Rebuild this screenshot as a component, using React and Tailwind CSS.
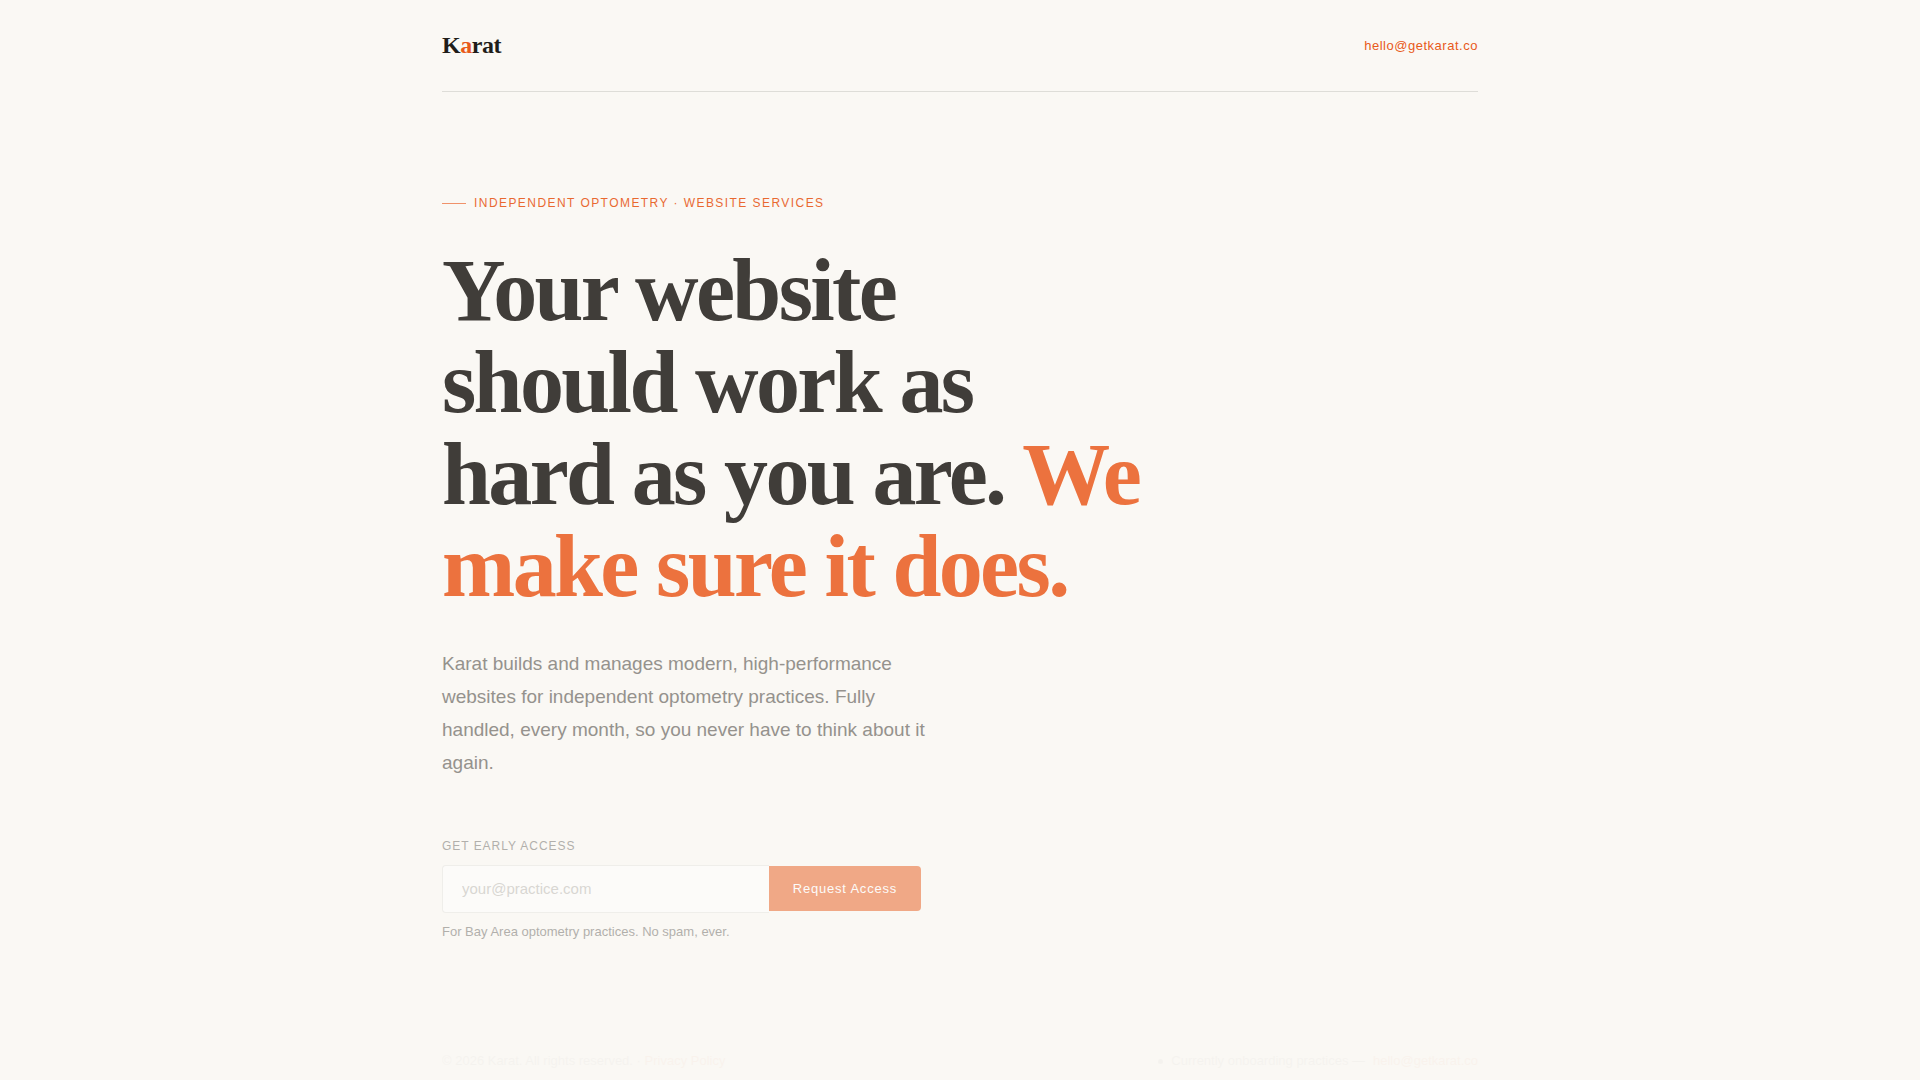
import React, { useState } from 'react';

const CONTACT_EMAIL = 'hello@getkarat.co';

function Header() {
  return (
    <header className="flex items-center justify-between border-b border-[#deddd8] py-8">
      <a href="/" className="font-['Liberation_Serif',serif] text-2xl leading-[27px] font-bold tracking-[-0.02em] text-[#1f1d1a]">
        K<span className="text-[#e85a1a]">a</span>rat
      </a>
      <a href={`mailto:${CONTACT_EMAIL}`} className="text-[13px] leading-4 tracking-[0.04em] text-[#e85a1a]">
        {CONTACT_EMAIL}
      </a>
    </header>
  );
}

function EarlyAccessForm() {
  const [email, setEmail] = useState('');

  return (
    <form className="mt-[59px] opacity-50" onSubmit={(e) => e.preventDefault()}>
      <label htmlFor="email" className="block text-xs leading-4 tracking-[0.08em] text-[#6b6965] uppercase">
        Get early access
      </label>
      <div className="mt-[11px] flex max-w-[479px] items-start">
        <input
          id="email"
          type="email"
          value={email}
          onChange={(e) => setEmail(e.target.value)}
          placeholder="your@practice.com"
          className="h-12 min-w-0 flex-1 rounded-l border border-r-0 border-[#e6e5e1] bg-white px-[19px] pb-px text-[15px] text-[#1f1d1a] outline-none placeholder:text-[#b8b6b2]"
        />
        <button type="submit" className="my-px h-[45px] rounded-r bg-[#e85a1a] px-6 text-[13px] tracking-[0.06em] text-white">
          Request Access
        </button>
      </div>
      <p className="mt-[11px] text-[13px] leading-4 text-[#6b6965]">For Bay Area optometry practices. No spam, ever.</p>
    </form>
  );
}

function Footer() {
  return (
    <footer className="flex items-center justify-between py-8 text-[13px] leading-4 text-[#6b6965] opacity-3">
      <p>
        © 2026 Karat. All rights reserved. · <a href="/privacy" className="text-[#e85a1a]">Privacy Policy</a>
      </p>
      <p className="flex items-center gap-2">
        <span className="size-[5px] rounded-full bg-[#6b6965]" />
        <span>Currently onboarding practices —</span>
        <a href={`mailto:${CONTACT_EMAIL}`} className="text-[#e85a1a]">{CONTACT_EMAIL}</a>
      </p>
    </footer>
  );
}

export default function App() {
  return (
    <div className="min-h-screen bg-[#faf8f4] font-['Liberation_Sans',sans-serif]">
      <div className="mx-auto max-w-[1100px] px-8">
        <Header />
        <main className="pt-[103px] pb-[81px]">
          <p className="flex items-center gap-2 text-xs leading-4 tracking-[0.12em] text-[#e85a1a] uppercase opacity-90">
            <span className="h-px w-6 bg-[#f0885c]" />
            Independent optometry · Website services
          </p>
          <h1 className="mt-[34px] max-w-[700px] font-['Liberation_Serif',serif] text-[88px] leading-[92px] font-bold tracking-[-0.03em] text-[#403d39]">
            Your website should work as hard as you are. <span className="text-[#ec723e]">We make sure it does.</span>
          </h1>
          <p className="mt-[34px] max-w-[500px] text-[19px] leading-[33px] text-[#95928d]">
            Karat builds and manages modern, high-performance websites for independent optometry practices. Fully
            handled, every month, so you never have to think about it again.
          </p>
          <EarlyAccessForm />
        </main>
        <Footer />
      </div>
    </div>
  );
}
